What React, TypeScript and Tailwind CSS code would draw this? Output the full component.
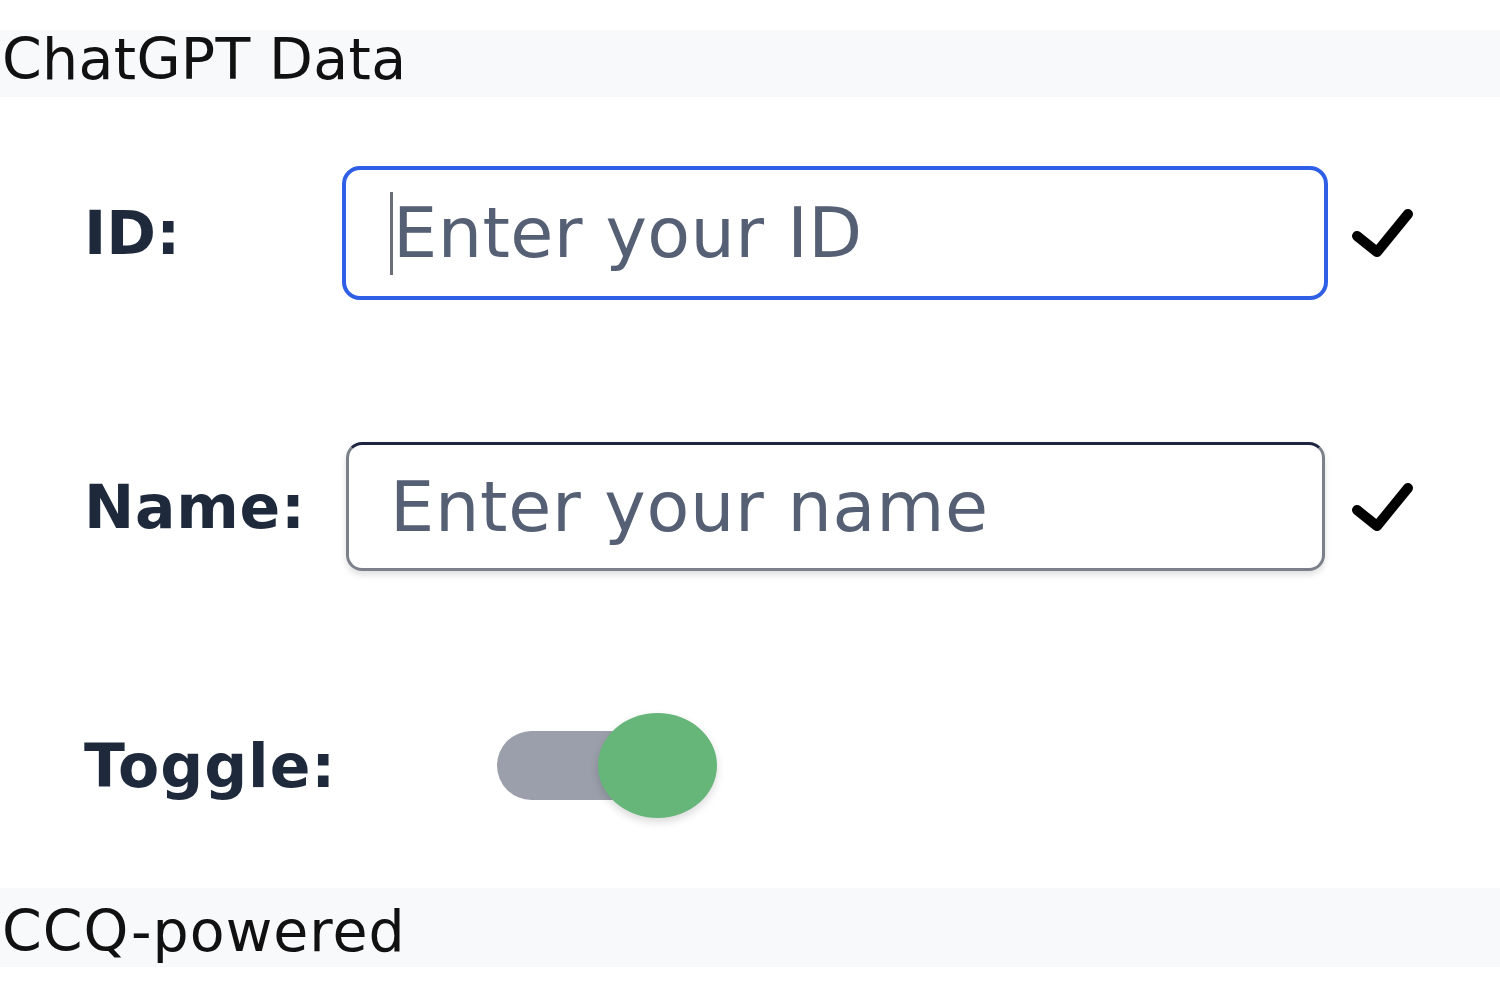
import React from "react";

function Check() {
  return (
    <svg width="64" height="52" viewBox="0 0 64 52" className="shrink-0">
      <polyline
        points="7,29 27,45 58,7"
        fill="none"
        stroke="#000"
        strokeWidth="10"
        strokeLinecap="round"
        strokeLinejoin="round"
      />
    </svg>
  );
}

export default function App() {
  return (
    <div
      className="w-[1500px] h-[1000px] bg-white overflow-hidden flex flex-col"
      style={{ fontFamily: '"DejaVu Sans", "Liberation Sans", sans-serif' }}
    >
      <div className="h-[30px]" />
      <div className="h-[67px] bg-[#f8f9fb] pl-[2px] pt-[1px] text-[57px] tracking-[0.3px] text-[#111] leading-none">
        ChatGPT Data
      </div>

      <div className="mt-[69px] flex items-center pl-[84px]">
        <div className="w-[258px] text-[60px] font-bold text-[#1e293b] leading-none">
          ID:
        </div>
        <div className="w-[986px] h-[134px] border-[4px] border-[#2f5fe6] rounded-[18px] flex items-center pl-[47px] relative">
          <div className="absolute left-[44px] top-[22px] w-[3px] h-[83px] bg-[#6b6f78]" />
          <span className="text-[70px] tracking-[0.4px] text-[#566074] leading-none">Enter your ID</span>
        </div>
        <div className="ml-[22px]">
          <Check />
        </div>
      </div>

      <div className="mt-[142px] flex items-center pl-[84px]">
        <div className="w-[262px] text-[60px] font-bold tracking-[0.8px] text-[#1e293b] leading-none">
          Name:
        </div>
        <div className="w-[979px] h-[129px] border-[3px] border-[#7b808b] border-t-[#1e2540] rounded-[16px] flex items-center pl-[41px] shadow-[0_4px_6px_rgba(0,0,0,0.12)]">
          <span className="text-[70px] tracking-[0.7px] text-[#566074] leading-none">Enter your name</span>
        </div>
        <div className="ml-[25px]">
          <Check />
        </div>
      </div>

      <div className="mt-[142px] flex items-center pl-[84px] h-[105px]">
        <div className="w-[413px] text-[60px] font-bold tracking-[1px] text-[#1e293b] leading-none">
          Toggle:
        </div>
        <div className="relative w-[220px] h-[105px] flex items-center">
          <div className="w-[150px] h-[69px] rounded-full bg-[#9a9fab]" />
          <div className="absolute left-[101px] top-0 w-[119px] h-[105px] rounded-[50%] bg-[#66b67a] shadow-[0_4px_8px_rgba(0,0,0,0.15)]" />
        </div>
      </div>

      <div className="mt-[70px] h-[79px] bg-[#f8f9fb] pl-[2px] pt-[15px] text-[57px] tracking-[1px] text-[#111] leading-none">
        CCQ-powered
      </div>
    </div>
  );
}
